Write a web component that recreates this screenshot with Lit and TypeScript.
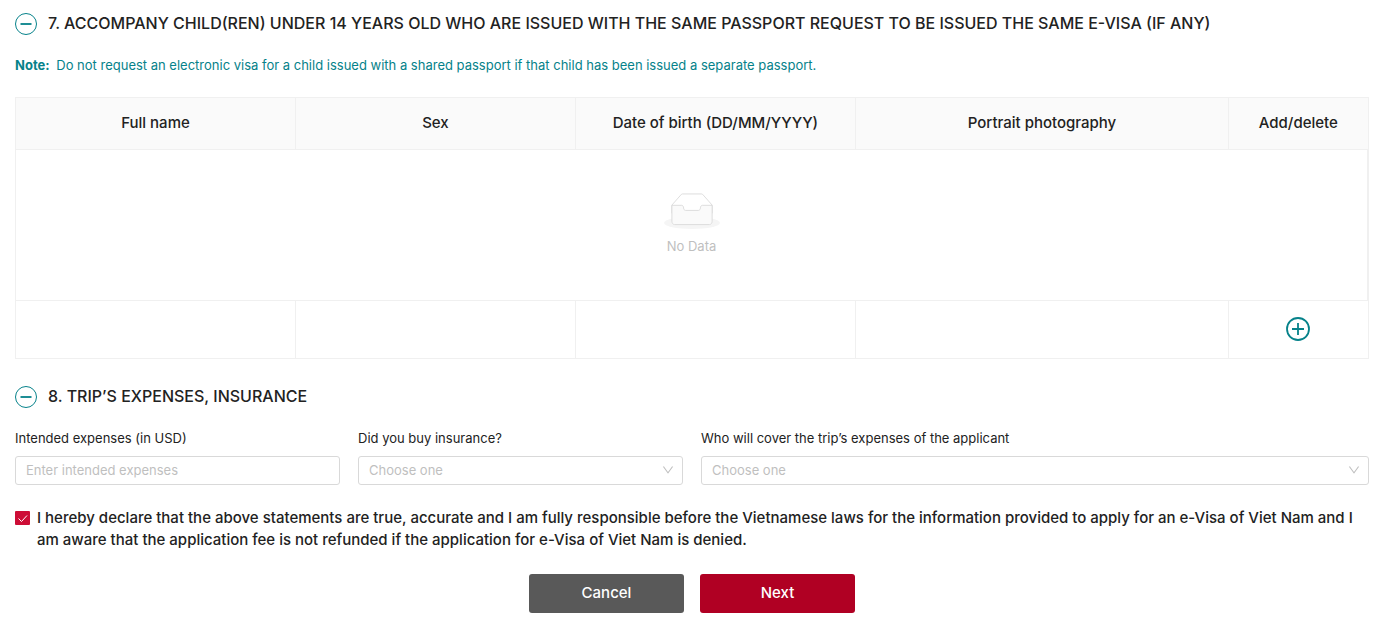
import { LitElement, html, css, svg } from "lit";
import { customElement, property } from "lit/decorators.js";

const chevron = html`<svg class="chevron" viewBox="64 64 896 896" width="12" height="12" aria-hidden="true">
  <path fill="currentColor" d="M884 256h-75c-5.100 0-9.900 2.500-12.900 6.600L512 654.200 227.900 262.600c-3-4.100-7.800-6.600-12.900-6.600h-75c-6.500 0-10.300 7.400-6.500 12.700l352.600 486.100c12.800 17.600 39 17.600 51.700 0l352.600-486.100c3.900-5.300.1-12.700-6.400-12.700z"/>
</svg>`;

const emptyBox = html`<svg class="empty-icon" width="64" height="41" viewBox="0 0 64 41" aria-hidden="true">
  <g transform="translate(0 1)" fill="none" fill-rule="evenodd">
    <ellipse fill="#f5f5f5" cx="32" cy="33" rx="32" ry="7"/>
    <g fill-rule="nonzero" stroke="#d9d9d9">
      <path d="M55 12.760L44.854 1.258C44.367.474 43.656 0 42.907 0H21.093c-.749 0-1.460.474-1.947 1.257L9 12.761V22h46v-9.240z"/>
      <path fill="#fafafa" d="M41.613 15.931c0-1.605.994-2.930 2.227-2.931H55v18.137C55 33.260 53.680 35 52.050 35h-40.100C10.320 35 9 33.259 9 31.137V13h11.160c1.233 0 2.227 1.323 2.227 2.928v.022c0 1.605 1.005 2.901 2.237 2.901h14.752c1.232 0 2.237-1.308 2.237-2.913v-.007z"/>
    </g>
  </g>
</svg>`;

@customElement("section-title")
export class SectionTitle extends LitElement {
  @property() text = "";

  static styles = css`
    :host {
      display: block;
    }
    .title {
      display: flex;
      align-items: flex-start;
      gap: 11px;
      margin: 0;
      font-size: 16px;
      line-height: 20px;
      font-weight: 500;
      color: #222;
    }
    .toggle {
      flex: none;
      display: block;
      width: 22px;
      height: 22px;
      padding: 0;
      border: 0;
      background: none;
      color: #06828a;
      cursor: pointer;
    }
    .toggle svg {
      display: block;
    }
  `;

  render() {
    return html`<h2 class="title">
      <button class="toggle" type="button" aria-label="Collapse section">
        <svg width="22" height="22" viewBox="0 0 22 22" fill="none" stroke="currentColor">
          ${svg`<circle cx="11" cy="11" r="10.500"/><path stroke-width="2" stroke-opacity="0.9" d="M5.500 11h11"/>`}
        </svg>
      </button>
      <span>${this.text}</span>
    </h2>`;
  }
}

@customElement("app-root")
export class AppRoot extends LitElement {
  static styles = css`
    :host {
      display: block;
      box-sizing: border-box;
      padding: 13px 23px 11px 15px;
      background: #fff;
      color: #222;
      font-family: "Be Vietnam", Inter, sans-serif;
      font-size: 13px;
      line-height: 20px;
    }
    * {
      box-sizing: border-box;
    }
    .note {
      margin: 20px 0 22px;
      color: #06828a;
    }
    .note-label {
      margin-right: 3px;
      font-weight: 700;
    }
    .children {
      width: 100%;
      table-layout: fixed;
      border-collapse: collapse;
      margin-bottom: 27px;
    }
    .children th,
    .children td {
      padding: 14px 16px 16px;
      border: 1px solid #f0f0f0;
      text-align: center;
    }
    .children th {
      background: #fafafa;
      font-size: 15px;
      line-height: 21px;
      font-weight: 500;
    }
    .wide {
      width: 20.700%;
    }
    .photo {
      width: 27.600%;
    }
    .children .empty {
      height: 151px;
      padding: 15px 16px 16px;
      color: #bfbfbf;
      border-right-width: 2px;
    }
    .empty-icon {
      display: block;
      width: 56px;
      height: 36px;
      margin: 0 auto 7px;
    }
    .children .slot {
      height: 58px;
    }
    .add {
      display: block;
      width: 24px;
      height: 24px;
      margin: 0 auto;
      padding: 0;
      border: 0;
      background: none;
      color: #06828a;
      cursor: pointer;
    }
    .add svg {
      display: block;
    }
    .fields {
      display: grid;
      grid-template-columns: repeat(4, minmax(0, 1fr));
      gap: 18px;
      margin: 20px 0 22px;
    }
    .field {
      display: flex;
      flex-direction: column;
      gap: 8px;
    }
    .double {
      grid-column: span 2;
    }
    .picker {
      display: grid;
      align-items: center;
    }
    .picker > * {
      grid-area: 1 / 1;
    }
    .control {
      width: 100%;
      height: 29px;
      margin: 0;
      padding: 0 10px 1px;
      border: 1px solid #d9d9d9;
      border-radius: 3px;
      background: #fff;
      color: #bfbfbf;
      font: inherit;
      appearance: none;
    }
    .control::placeholder {
      color: #bfbfbf;
      opacity: 1;
    }
    .chevron {
      justify-self: end;
      margin: 0 9px 1px 0;
      color: #bfbfbf;
      pointer-events: none;
    }
    .declare {
      display: flex;
      align-items: flex-start;
      gap: 7px;
      margin-bottom: 23px;
      font-size: 15px;
      line-height: 22px;
      font-weight: 500;
    }
    .tick {
      flex: none;
      display: grid;
      margin-top: 4px;
    }
    .tick > * {
      grid-area: 1 / 1;
    }
    .tick input {
      appearance: none;
      width: 15px;
      height: 14px;
      margin: 0;
      border-radius: 1px;
      background: #cd0d36;
    }
    .tick svg {
      pointer-events: none;
    }
    .actions {
      display: flex;
      justify-content: center;
      gap: 16px;
    }
    .action {
      width: 155px;
      height: 39px;
      padding: 0 0 2px;
      border: 0;
      border-radius: 3px;
      color: #fff;
      font: inherit;
      font-size: 15px;
      font-weight: 500;
      cursor: pointer;
    }
    .cancel {
      background: #595959;
    }
    .next {
      background: #b00023;
    }
  `;

  render() {
    return html`
      <section-title text="7. ACCOMPANY CHILD(REN) UNDER 14 YEARS OLD WHO ARE ISSUED WITH THE SAME PASSPORT REQUEST TO BE ISSUED THE SAME E-VISA (IF ANY)"></section-title>
      <p class="note">
        <span class="note-label">Note:</span>
        Do not request an electronic visa for a child issued with a shared passport if that child has been issued a separate passport.
      </p>
      <table class="children">
        <thead>
          <tr>
            <th class="wide" scope="col">Full name</th>
            <th class="wide" scope="col">Sex</th>
            <th class="wide" scope="col">Date of birth (DD/MM/YYYY)</th>
            <th class="photo" scope="col">Portrait photography</th>
            <th scope="col">Add/delete</th>
          </tr>
        </thead>
        <tbody>
          <tr>
            <td class="empty" colspan="5">${emptyBox}No Data</td>
          </tr>
        </tbody>
        <tfoot>
          <tr>
            <td class="slot"></td>
            <td class="slot"></td>
            <td class="slot"></td>
            <td class="slot"></td>
            <td class="slot">
              <button class="add" type="button" aria-label="Add child">
                <svg width="24" height="24" viewBox="0 0 24 24" fill="none" stroke="currentColor" stroke-width="1.800">
                  <circle cx="12" cy="12" r="11"/>
                  <path d="M6 12h12M12 6v12"/>
                </svg>
              </button>
            </td>
          </tr>
        </tfoot>
      </table>

      <section-title text="8. TRIP’S EXPENSES, INSURANCE"></section-title>
      <div class="fields">
        <div class="field">
          <label for="expenses">Intended expenses (in USD)</label>
          <input id="expenses" class="control" type="text" placeholder="Enter intended expenses" />
        </div>
        <div class="field">
          <label for="insurance">Did you buy insurance?</label>
          <div class="picker">
            <select id="insurance" class="control"><option>Choose one</option></select>
            ${chevron}
          </div>
        </div>
        <div class="field double">
          <label for="cover">Who will cover the trip’s expenses of the applicant</label>
          <div class="picker">
            <select id="cover" class="control"><option>Choose one</option></select>
            ${chevron}
          </div>
        </div>
      </div>

      <div class="declare">
        <span class="tick">
          <input id="declare" type="checkbox" checked />
          <svg width="15" height="14" viewBox="0 0 15 14" fill="none" stroke="#fff" aria-hidden="true">
            <path d="M3.500 7.500l3 3 5.500-6"/>
          </svg>
        </span>
        <label for="declare">I hereby declare that the above statements are true, accurate and I am fully responsible before the Vietnamese laws for the information provided to apply for an e-Visa of Viet Nam and I am aware that the application fee is not refunded if the application for e-Visa of Viet Nam is denied.</label>
      </div>

      <div class="actions">
        <button class="action cancel" type="button">Cancel</button>
        <button class="action next" type="button">Next</button>
      </div>
    `;
  }
}
